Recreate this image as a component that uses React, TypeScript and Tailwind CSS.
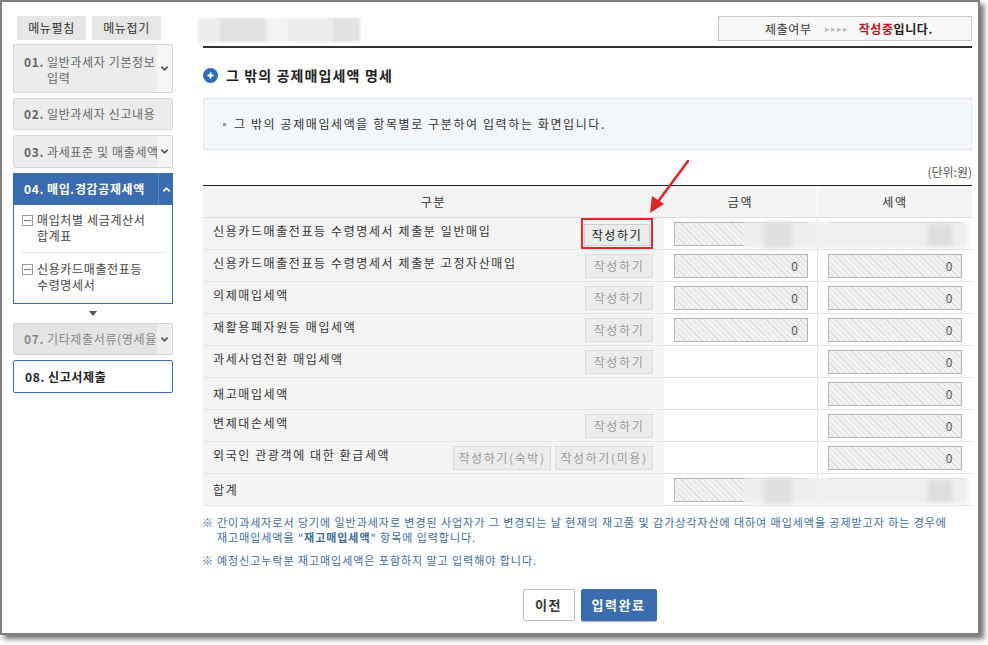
import { ChevronDown, ChevronUp } from 'lucide-react';

const hatch =
  'bg-[repeating-linear-gradient(45deg,#f2f2f2_0px,#f2f2f2_3px,#dedede_3px,#dedede_4px)]';

type Row = {
  label: string;
  buttons: string[];
  active?: boolean;
  amount: string | null;
  tax: string | null;
  blur?: boolean;
};

const rows: Row[] = [
  { label: '신용카드매출전표등 수령명세서 제출분 일반매입', buttons: ['작성하기'], active: true, amount: '', tax: '', blur: true },
  { label: '신용카드매출전표등 수령명세서 제출분 고정자산매입', buttons: ['작성하기'], amount: '0', tax: '0' },
  { label: '의제매입세액', buttons: ['작성하기'], amount: '0', tax: '0' },
  { label: '재활용폐자원등 매입세액', buttons: ['작성하기'], amount: '0', tax: '0' },
  { label: '과세사업전환 매입세액', buttons: ['작성하기'], amount: null, tax: '0' },
  { label: '재고매입세액', buttons: [], amount: null, tax: '0' },
  { label: '변제대손세액', buttons: ['작성하기'], amount: null, tax: '0' },
  { label: '외국인 관광객에 대한 환급세액', buttons: ['작성하기(숙박)', '작성하기(미용)'], amount: null, tax: '0' },
  { label: '합계', buttons: [], amount: '', tax: '', blur: true },
];

const Field = ({ value }: { value: string }) => (
  <div className={`h-[24px] w-[134px] border border-[#b4b4b4] ${hatch} flex items-center justify-end pr-[7px] text-[12px] text-[#555]`}>
    {value}
  </div>
);

const Sidebar = () => (
  <aside className="w-[188px] shrink-0 pl-[11px] pt-[14px] tracking-[0.04em]">
    <div className="flex gap-[6px] pl-[4px]">
      <button className="h-[24px] w-[69px] bg-[#e6e6e6] text-[12px] text-[#333]">메뉴펼침</button>
      <button className="h-[24px] w-[69px] bg-[#e6e6e6] text-[12px] text-[#333]">메뉴접기</button>
    </div>

    <div className="mt-[4px] w-[160px] flex flex-col gap-[5px] text-[12px] leading-[16px]">
      <div className="flex h-[49px] rounded-[2px] border border-[#d6d6d6] bg-[#ececec] text-[#666]">
        <div className="flex-1 min-w-0 overflow-hidden flex pl-[10px] pt-[9px] whitespace-nowrap">
          <span className="font-bold w-[23px] shrink-0">01.</span>
          <span>일반과세자 기본정보<br />입력</span>
        </div>
        <div className="w-[15px] shrink-0 bg-[#f5f5f5] flex items-center justify-center text-[#555]">
          <ChevronDown size={11} strokeWidth={3.5} />
        </div>
      </div>

      <div className="flex items-center h-[32px] rounded-[2px] border border-[#d6d6d6] bg-[#ececec] text-[#666] pl-[10px] whitespace-nowrap overflow-hidden">
        <span className="font-bold w-[23px] shrink-0">02.</span>
        <span>일반과세자 신고내용</span>
      </div>

      <div className="flex h-[33px] rounded-[2px] border border-[#d6d6d6] bg-[#ececec] text-[#666]">
        <div className="flex-1 min-w-0 overflow-hidden flex items-center pl-[10px] whitespace-nowrap">
          <span className="font-bold w-[23px] shrink-0">03.</span>
          <span>과세표준 및 매출세액</span>
        </div>
        <div className="w-[15px] shrink-0 bg-[#f5f5f5] flex items-center justify-center text-[#555]">
          <ChevronDown size={11} strokeWidth={3.5} />
        </div>
      </div>

      <div>
        <div className="flex h-[32px] bg-[#3a6cb0] text-white font-bold">
          <div className="flex-1 min-w-0 overflow-hidden flex items-center pl-[11px] whitespace-nowrap">
            <span className="w-[23px] shrink-0">04.</span>
            <span>매입.경감공제세액</span>
          </div>
          <div className="w-[15px] shrink-0 border-l border-[#5a86c0] flex items-center justify-center">
            <ChevronUp size={11} strokeWidth={3.5} />
          </div>
        </div>
        <div className="border border-t-0 border-[#3a6cb0] bg-white px-[8px] text-[#444]">
          <div className="flex gap-[4px] pt-[7px] pb-[8px] border-b border-[#e6e6e6]">
            <span className="mt-[3px] w-[11px] h-[11px] border border-[#9a9a9a] flex items-center justify-center shrink-0">
              <span className="block w-[7px] h-px bg-[#777]" />
            </span>
            <span>매입처별 세금계산서<br />합계표</span>
          </div>
          <div className="flex gap-[4px] pt-[8px] pb-[10px]">
            <span className="mt-[3px] w-[11px] h-[11px] border border-[#9a9a9a] flex items-center justify-center shrink-0">
              <span className="block w-[7px] h-px bg-[#777]" />
            </span>
            <span>신용카드매출전표등<br />수령명세서</span>
          </div>
        </div>
      </div>

      <div className="flex justify-center h-[9px] items-center">
        <span className="block w-0 h-0 border-l-[4px] border-r-[4px] border-t-[5px] border-l-transparent border-r-transparent border-t-[#555]" />
      </div>

      <div className="flex h-[32px] rounded-[2px] border border-[#d6d6d6] bg-[#e4e4e4] text-[#888]">
        <div className="flex-1 min-w-0 overflow-hidden flex items-center pl-[10px] whitespace-nowrap">
          <span className="font-bold w-[23px] shrink-0">07.</span>
          <span>기타제출서류(영세율</span>
        </div>
        <div className="w-[15px] shrink-0 bg-[#efefef] flex items-center justify-center text-[#555]">
          <ChevronDown size={11} strokeWidth={3.5} />
        </div>
      </div>

      <div className="flex items-center h-[33px] rounded-[2px] border border-[#3a6cb0] bg-white text-[#222] font-bold pl-[11px] whitespace-nowrap">
        <span className="w-[23px] shrink-0">08.</span>
        <span>신고서제출</span>
      </div>
    </div>
  </aside>
);

const TableRow = ({ row }: { row: Row }) => (
  <div className="grid grid-cols-[461px_154px_154px] h-[32px] border-b border-[#e4e4e4]">
    <div className="bg-[#f4f4f4] flex items-center justify-between pl-[10px] pr-[11px]">
      <span className={`text-[12px] text-[#333] whitespace-nowrap ${row.buttons.length ? 'pb-[6px]' : ''}`}>{row.label}</span>
      <div className="flex gap-[4px]">
        {row.buttons.map((b) =>
          row.active ? (
            <div key={b} className="border-2 border-[#e3262a] p-px">
              <button className="h-[22px] w-[66px] bg-[#ececec] border border-[#cfcfcf] text-[12px] text-[#222]">{b}</button>
            </div>
          ) : (
            <button
              key={b}
              className={`h-[24px] ${b.length > 4 ? 'w-[98px]' : 'w-[68px]'} bg-[#ececec] border border-[#dcdcdc] text-[12px] text-[#9a9a9a] whitespace-nowrap`}
            >
              {b}
            </button>
          )
        )}
      </div>
    </div>
    <div className="relative flex items-center justify-center border-r border-[#e4e4e4]">
      {row.amount !== null && <Field value={row.amount} />}
      {row.blur && (
        <>
          <div className="absolute left-[80px] top-[4px] w-[74px] h-[26px] bg-[#efefef] blur-[1px]" />
          <div className="absolute left-[100px] top-[4px] w-[28px] h-[26px] bg-[#e0e0e0] blur-[2px]" />
        </>
      )}
    </div>
    <div className="relative flex items-center justify-center">
      {row.tax !== null && <Field value={row.tax} />}
      {row.blur && (
        <>
          <div className="absolute left-0 top-[4px] w-[150px] h-[26px] bg-[#f0f0f0] blur-[1px]" />
          <div className="absolute left-[110px] top-[6px] w-[24px] h-[22px] bg-[#dedede] blur-[2px]" />
        </>
      )}
    </div>
  </div>
);

export default function App() {
  return (
    <div className="relative w-[988px] h-[645px] bg-white font-['Noto_Sans_CJK_KR',sans-serif] text-[#333]">
      <div className="flex w-[980px] h-[635px] border-2 border-[#808080] bg-white shadow-[4px_4px_5px_rgba(0,0,0,0.55)]">
        <Sidebar />

        <main className="flex-1 pl-[13px] pr-[6px] pt-[14px] tracking-[0.1em]">
          <div className="flex justify-between items-start h-[25px]">
            <div className="relative -ml-[5px] mt-[2px] w-[162px] h-[24px] bg-[#ececec] blur-[1px]">
              <div className="absolute left-[22px] top-0 w-[45px] h-[24px] bg-[#e2e2e2]" />
              <div className="absolute left-[70px] top-0 w-[20px] h-[24px] bg-[#f4f4f4]" />
              <div className="absolute left-[135px] top-0 w-[27px] h-[24px] bg-[#e2e2e2]" />
            </div>
            <div className="w-[254px] h-[25px] border border-[#c8c8c8] bg-[#f8f8f8] flex items-center justify-end pr-[38px] text-[12px] tracking-[0.05em]">
              <span className="text-[#333]">제출여부</span>
              <span className="ml-[13px] mr-[10px] text-[9px] text-[#bbb] tracking-[1px]">▸▸▸▸</span>
              <span className="font-bold text-[#c4161c]">작성중</span>
              <span className="font-bold text-[#222]">입니다.</span>
            </div>
          </div>
          <div className="mt-[5px] h-[2px] bg-[#333]" />

          <div className="mt-[17px] flex items-center gap-[8px] h-[20px]">
            <span className="w-[15px] h-[15px] rounded-full bg-[#2c6cb8] flex items-center justify-center">
              <svg width="9" height="9" viewBox="0 0 9 9">
                <path d="M4.5 1.5v6M1.5 4.5h6" stroke="white" strokeWidth="1.8" />
              </svg>
            </span>
            <h1 className="text-[14px] font-bold text-[#222] tracking-[0.08em]">그 밖의 공제매입세액 명세</h1>
          </div>

          <div className="mt-[13px] h-[52px] bg-[#f3f6fa] border border-[#e3e8ef] flex items-center pl-[19px] text-[12px] text-[#333]">
            <span className="block w-[3px] h-[3px] bg-[#999] mr-[8px]" />
            그 밖의 공제매입세액을 항목별로 구분하여 입력하는 화면입니다.
          </div>

          <div className="mt-[13px] h-[16px] text-right text-[12px] text-[#555] tracking-normal">(단위:원)</div>

          <div className="mt-[6px] border-t border-[#222]">
            <div className="grid grid-cols-[461px_154px_154px] h-[32px] bg-[#f4f4f4] border-b border-[#dcdcdc] text-[12px] text-[#333]">
              <div className="flex items-center justify-center">구분</div>
              <div className="flex items-center justify-center border-r border-white">금액</div>
              <div className="flex items-center justify-center">세액</div>
            </div>
            {rows.map((row) => (
              <TableRow key={row.label} row={row} />
            ))}
          </div>

          <div className="mt-[9px] -ml-[1px] text-[11px] leading-[15px] tracking-[0.95px] text-[#3d6d9a]">
            <p className="flex">
              <span className="w-[15px] shrink-0">※</span>
              <span className="whitespace-nowrap">
                간이과세자로서 당기에 일반과세자로 변경된 사업자가 그 변경되는 날 현재의 재고품 및 감가상각자산에 대하여 매입세액을 공제받고자 하는 경우에
                <br />
                재고매입세액을 "<b>재고매입세액</b>" 항목에 입력합니다.
              </span>
            </p>
            <p className="mt-[8px] flex">
              <span className="w-[15px] shrink-0">※</span>
              <span>예정신고누락분 재고매입세액은 포함하지 말고 입력해야 합니다.</span>
            </p>
          </div>

          <div className="mt-[21px] flex justify-center gap-[6px] pl-[4px]">
            <button className="h-[32px] w-[52px] rounded-[2px] border border-[#bdbdbd] bg-white text-[13px] font-bold text-[#333]">
              이전
            </button>
            <button className="h-[32px] w-[76px] rounded-[2px] bg-[#3a6cb0] text-[13px] font-bold text-white shadow-[0_1px_1px_rgba(0,0,0,0.3)]">
              입력완료
            </button>
          </div>
        </main>
      </div>

      <svg className="absolute left-0 top-0 pointer-events-none" width="988" height="645">
        <line x1="688" y1="161" x2="657" y2="203" stroke="#e02424" strokeWidth="2.5" strokeLinecap="round" />
        <polygon points="650,213 652,196 664,204" fill="#e02424" />
      </svg>
    </div>
  );
}
